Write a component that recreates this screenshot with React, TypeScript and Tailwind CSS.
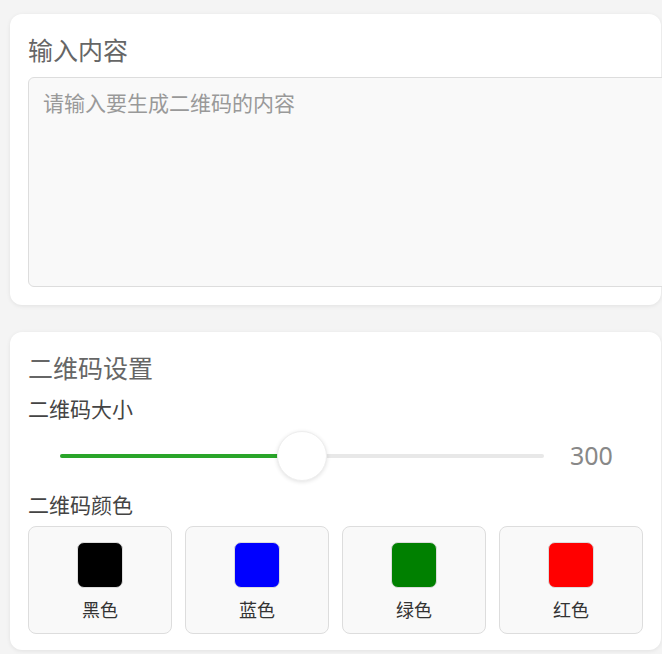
import React, { useState } from "react";

const colors = [
    { name: "黑色", value: "#000000" },
    { name: "蓝色", value: "#0000ff" },
    { name: "绿色", value: "#008000" },
    { name: "红色", value: "#ff0000" },
];

export default function App() {
    const [text, setText] = useState("");
    const [size] = useState(300);
    const [color, setColor] = useState("#000000");
    const percent = ((size - 100) / 400) * 100;

    return (
        <div
            className="w-[662px] h-screen overflow-hidden bg-[#f4f4f4] pt-[14px] pl-[10px]"
            style={{ fontFamily: '"Noto Sans", "Noto Sans CJK SC", sans-serif' }}
        >
            {/* 输入内容 */}
            <div className="w-[651px] bg-white rounded-[12px] shadow-[0_1px_4px_rgba(0,0,0,0.08)] p-[18px]">
                <h2 className="h-[36px] leading-[36px] mb-[9px] text-[25px] text-[#666]">输入内容</h2>
                <textarea
                    value={text}
                    onChange={(e) => setText(e.target.value)}
                    placeholder="请输入要生成二维码的内容"
                    className="block w-[650px] h-[210px] resize-none bg-[#f9f9f9] border border-[#ddd] rounded-[6px] px-[14px] py-[10px] text-[21px] leading-[30px] text-[#333] placeholder:text-[#999] outline-none"
                />
            </div>

            {/* 二维码设置 */}
            <div className="w-[651px] mt-[27px] bg-white rounded-[12px] shadow-[0_1px_4px_rgba(0,0,0,0.08)] px-[18px] pt-[18px] pb-[16px]">
                <h2 className="h-[36px] leading-[36px] mb-[9px] text-[25px] text-[#666]">二维码设置</h2>
                <div className="h-[28px] leading-[28px] text-[21px] text-[#444]">二维码大小</div>

                <div className="flex items-center h-[50px] mt-[8px] pl-[32px]">
                    <div className="relative w-[484px] h-[4px] rounded-full bg-[#e8e8e8]">
                        <div className="h-full rounded-full bg-[#2aa52a]" style={{ width: `${percent}%` }} />
                        <div
                            className="absolute top-1/2 w-[50px] h-[50px] -translate-x-1/2 -translate-y-1/2 rounded-full bg-white border border-[#eee] shadow-[0_1px_4px_rgba(0,0,0,0.12)]"
                            style={{ left: `${percent}%` }}
                        />
                    </div>
                    <span className="ml-[26px] text-[25px] text-[#888]">{size}</span>
                </div>

                <div className="h-[28px] leading-[28px] mt-[10px] mb-[7px] text-[21px] text-[#444]">二维码颜色</div>

                <div className="grid grid-cols-4 gap-[13px]">
                    {colors.map((c) => (
                        <button
                            key={c.value}
                            onClick={() => setColor(c.value)}
                            className="flex flex-col items-center h-[108px] pt-[15px] bg-[#f9f9f9] border border-[#ddd] rounded-[8px] cursor-pointer"
                        >
                            <span
                                className="block w-[46px] h-[46px] rounded-[7px] border border-[#ddd]"
                                style={{ backgroundColor: c.value }}
                            />
                            <span className="mt-[9px] h-[26px] leading-[26px] text-[18px] text-[#333]">{c.name}</span>
                        </button>
                    ))}
                </div>
            </div>
        </div>
    );
}
